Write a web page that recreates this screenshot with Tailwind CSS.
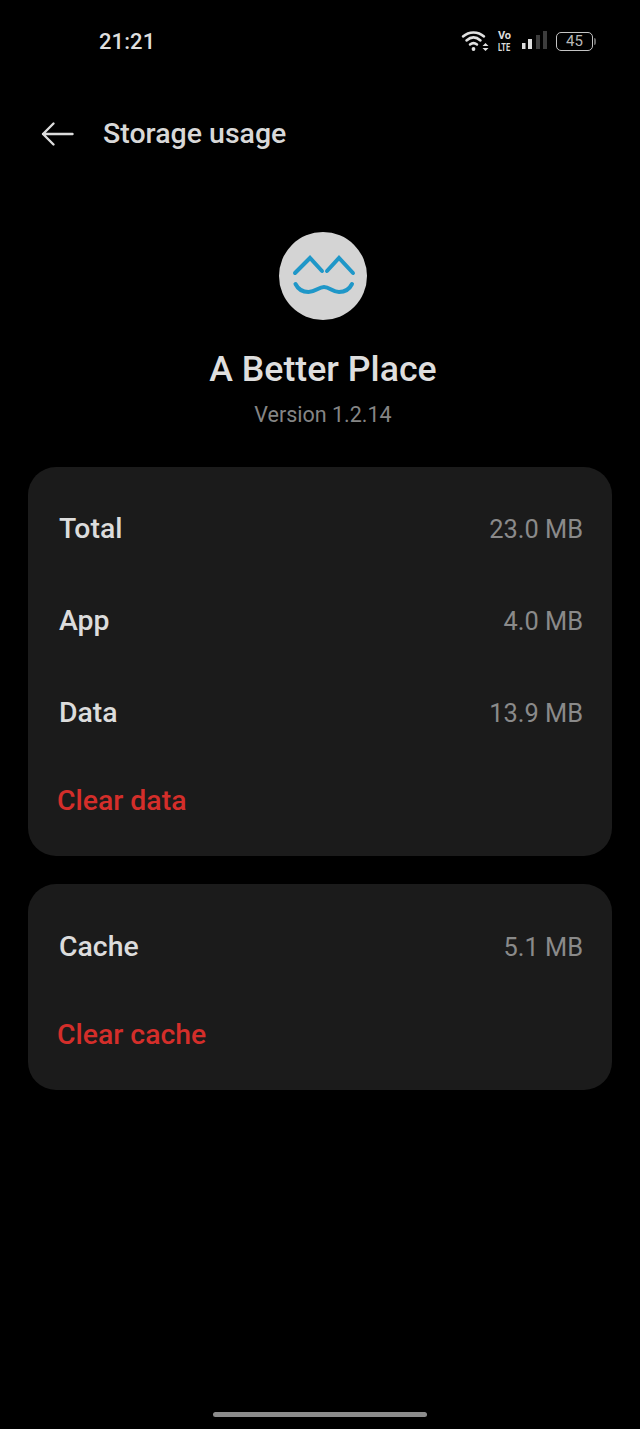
<!DOCTYPE html>
<html lang="en">
<head>
    <meta charset="UTF-8">
    <title>Storage usage</title>
    <script src="https://cdn.jsdelivr.net/npm/@tailwindcss/browser@4"></script>
</head>
<body class="bg-black font-['Roboto',sans-serif]">
    <div class="flex flex-col w-[640px] h-[1429px] bg-black overflow-hidden">
        <!-- status bar -->
        <div class="flex items-center justify-between h-[82px] pl-[99px] pr-[44px] shrink-0">
            <span class="pt-[1px] text-[22px] font-medium text-[#dedede] tracking-[0.1px]">21:21</span>
            <div class="flex items-center">
                <svg width="28" height="22" viewBox="0 0 28 22" fill="none" stroke="#e0e0e0" stroke-width="2.5" stroke-linecap="round">
                    <path d="M2 6.5C8 1 17 1 23 6.5"/>
                    <path d="M5.5 10.5C10 6.5 15 6.5 19.5 10.5"/>
                    <path d="M9 14.5C11.5 12.5 13.5 12.5 16 14.5"/>
                    <circle cx="12.5" cy="19" r="1.9" fill="#e0e0e0" stroke="none"/>
                    <path d="M21.5 16l3-3 3 3zM21.5 18l3 3 3-3z" fill="#e0e0e0" stroke="none"/>
                </svg>
                <div class="flex flex-col items-center ml-[8px] w-[15px] font-bold text-[#dcdcdc]">
                    <span class="text-[11px] leading-[13px]">Vo</span>
                    <span class="text-[10px] leading-[12px] scale-x-75">LTE</span>
                </div>
                <svg class="ml-[9px]" width="26" height="20" viewBox="0 0 26 20" fill="#dcdcdc">
                    <rect x="1" y="12" width="3.5" height="6"/>
                    <rect x="7" y="8" width="4" height="10"/>
                    <rect x="15" y="4" width="4" height="14" fill="#3c3c3c"/>
                    <rect x="22" y="0" width="4" height="18" fill="#3c3c3c"/>
                </svg>
                <div class="flex items-center ml-[9px]">
                    <div class="flex items-center justify-center w-[37px] h-[19px] border-[1.5px] border-[#c4c4c4] rounded-[5px] text-[15px] leading-none text-[#b8b8b8]">45</div>
                    <div class="ml-[1px] w-[2px] h-[7px] bg-[#666] rounded-r-sm"></div>
                </div>
            </div>
        </div>

        <!-- title bar -->
        <div class="flex items-center h-[104px] pl-[41px] shrink-0">
            <svg width="33" height="26" viewBox="0 0 33 26" fill="none" stroke="#dcdcdc" stroke-width="2.4" stroke-linecap="round" stroke-linejoin="round">
                <path d="M31.5 13H2M12.5 2.5L2 13l10.5 10.5"/>
            </svg>
            <h1 class="ml-[29px] text-[28.5px] font-medium text-[#d8d8d8]">Storage usage</h1>
        </div>

        <!-- app header -->
        <div class="flex flex-col items-center mt-[46px] pl-[6px] shrink-0">
            <div class="w-[88px] h-[88px] rounded-full bg-[#d4d4d4]">
                <svg width="88" height="88" viewBox="0 0 88 88" fill="none" stroke="#1f97c8" stroke-width="4" stroke-linejoin="miter" stroke-linecap="round">
                    <path d="M16 41L31 26 43 39M48 39L60 26 74 41"/>
                    <path d="M16.5 52c3 6 8 8 13 8 7 0 10-5 15.5-5s9 5 15 5c5 0 10-2 13-8"/>
                </svg>
            </div>
            <h2 class="mt-[29px] text-[35.7px] leading-[40px] font-medium text-[#dedede]">A Better Place</h2>
            <p class="mt-[13px] text-[21.5px] leading-[25px] text-[#858585]">Version 1.2.14</p>
        </div>

        <!-- total / app / data -->
        <div class="mt-[40px] mx-[28px] h-[389px] pt-[16px] rounded-[28px] bg-[#1b1b1b] shrink-0">
            <div class="flex items-center justify-between h-[92px] pl-[31px] pr-[29px]">
                <span class="text-[28.4px] font-medium text-[#dcdcdc]">Total</span>
                <span class="text-[25.4px] text-[#8a8a8a]">23.0 MB</span>
            </div>
            <div class="flex items-center justify-between h-[92px] pl-[31px] pr-[29px]">
                <span class="text-[28.4px] font-medium text-[#dcdcdc]">App</span>
                <span class="text-[25.4px] text-[#8a8a8a]">4.0 MB</span>
            </div>
            <div class="flex items-center justify-between h-[92px] pl-[31px] pr-[29px]">
                <span class="text-[28.4px] font-medium text-[#dcdcdc]">Data</span>
                <span class="text-[25.4px] text-[#8a8a8a]">13.9 MB</span>
            </div>
            <div class="flex items-center h-[84px] pl-[29px] text-[28.4px] font-medium text-[#d42e2a]">Clear data</div>
        </div>

        <!-- cache -->
        <div class="mt-[28px] mx-[28px] h-[206px] pt-[17px] rounded-[28px] bg-[#1b1b1b] shrink-0">
            <div class="flex items-center justify-between h-[92px] pl-[31px] pr-[29px]">
                <span class="text-[28.4px] font-medium text-[#dcdcdc]">Cache</span>
                <span class="text-[25.4px] text-[#8a8a8a]">5.1 MB</span>
            </div>
            <div class="flex items-center h-[84px] pl-[29px] text-[28.4px] font-medium text-[#d42e2a]">Clear cache</div>
        </div>

        <!-- gesture bar -->
        <div class="mt-auto mb-[12px] mx-auto w-[214px] h-[5px] rounded-full bg-[#8c8c8c]"></div>
    </div>
</body>
</html>
